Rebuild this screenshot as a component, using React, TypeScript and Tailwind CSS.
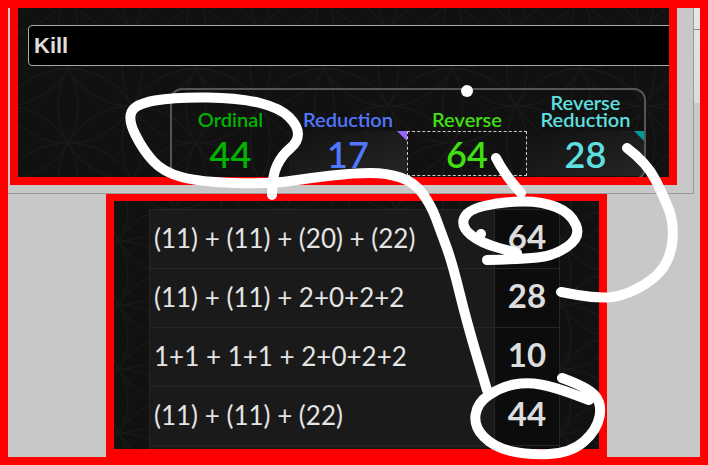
type Pt = [number, number];

// annotation strokes, hand drawn over the screenshot
const strokes: Pt[][] = [
  [[272,195],[272,176],[282,155],[298,142],[298,126],[280,108],[240,98],[175,97],[135,104],[128,120],[143,150],[163,172],[200,182],[270,184],[310,178],[354,173],[387,173],[414,182],[431,205],[441,232],[452,262],[467,323],[487,390]],
  [[562,378],[587,387],[602,403],[597,430],[571,453],[527,455],[494,447],[474,427],[477,403],[501,387],[527,382],[554,387],[589,400]],
  [[487,260],[521,259],[554,256],[581,237],[571,213],[541,201],[501,202],[467,210],[461,227],[481,243],[517,253]],
  [[496,158],[504,173],[521,193]],
  [[627,148],[647,163],[664,197],[674,223],[671,257],[654,280],[621,297],[594,298],[561,292]],
];

function smooth(pts: Pt[]) {
  let d = `M${pts[0][0]} ${pts[0][1]}`;
  for (let i = 1; i < pts.length - 1; i++) {
    const mx = (pts[i][0] + pts[i + 1][0]) / 2;
    const my = (pts[i][1] + pts[i + 1][1]) / 2;
    d += ` Q${pts[i][0]} ${pts[i][1]} ${mx} ${my}`;
  }
  const last = pts[pts.length - 1];
  return d + ` L${last[0]} ${last[1]}`;
}

// flower of life background
function Flower({ cx, cy, r }: { cx: number; cy: number; r: number }) {
  const circles: Pt[] = [];
  const dx = (r * Math.sqrt(3)) / 2;
  for (let i = -10; i <= 10; i++) {
    for (let j = -8; j <= 8; j++) {
      circles.push([cx + i * dx, cy + j * r + (i % 2 ? r / 2 : 0)]);
    }
  }
  return (
    <svg className="absolute inset-0 w-full h-full" fill="none" stroke="#191919" strokeWidth="1.5">
      {circles.map(([x, y], i) => (
        <circle key={i} cx={x} cy={y} r={r} />
      ))}
    </svg>
  );
}

const ciphers = [
  { label: ["Ordinal"], value: 44, text: "text-[#00b400]", w: "w-[117px]" },
  { label: ["Reduction"], value: 17, text: "text-[#5277ff]", w: "w-[118px]", corner: "border-t-[#9966ff]" },
  { label: ["Reverse"], value: 64, text: "text-[#40e010]", w: "w-[120px]", focus: true },
  { label: ["Reverse", "Reduction"], value: 28, text: "text-[#5ee0e0]", w: "w-[117px]", corner: "border-t-[#009999]" },
];

const rows = [
  { sum: "(11) + (11) + (20) + (22)", total: 64 },
  { sum: "(11) + (11) + 2+0+2+2", total: 28 },
  { sum: "1+1 + 1+1 + 2+0+2+2", total: 10 },
  { sum: "(11) + (11) + (22)", total: 44 },
  { sum: "", total: "" },
];

export default function App() {
  return (
    <div className="relative w-[708px] h-[465px] p-2 bg-[#f00] overflow-hidden font-['Lato',sans-serif]">
      <div className="h-[449px] bg-[#c8c8c8] flex flex-col">
        <div className="flex">
          {/* ENTRY PANEL */}
          <div className="w-[686px] pl-[2px] pr-4 pb-2 bg-[#c8c8c8] border-r border-b border-[#9a9a9a]">
            <div className="relative h-[177px] border-x-8 border-b-8 border-[#f00] bg-[#111] overflow-hidden">
              <Flower cx={50} cy={135} r={74} />
              <div className="relative pt-[17px] pl-[10px]">
                <div className="w-[700px] h-[41px] rounded-[4px] border border-[#aaa] bg-black pl-[5px] flex items-center font-['Liberation_Sans',sans-serif] font-bold text-[22px] text-[#ddd]">
                  Kill
                </div>
                <div className="mt-[22px] ml-[142px] w-[476px] h-[92px] rounded-xl border-2 border-[#555] flex overflow-hidden">
                  {ciphers.map((c) => (
                    <div key={c.value} className={`${c.w} shrink-0 flex flex-col`}>
                      <div className={`h-[41px] flex flex-col items-center justify-end text-[20px] leading-[17px] font-semibold pb-[3px] ${c.text}`}>
                        {c.label.map((l) => (
                          <span key={l}>{l}</span>
                        ))}
                      </div>
                      <div
                        className={`relative h-[45px] flex items-center justify-center text-[36px] font-semibold ${c.text} ${
                          c.focus ? "border border-dashed border-[#ccc]" : c.corner ? "bg-gradient-to-br from-[#111] to-[#262626]" : ""
                        }`}
                      >
                        {c.value}
                        {c.corner && (
                          <span className={`absolute top-0 right-0 w-0 h-0 border-l-[10px] border-l-transparent border-t-[10px] ${c.corner}`} />
                        )}
                      </div>
                    </div>
                  ))}
                </div>
              </div>
            </div>
          </div>
          {/* sliver of the scrollbar on the right */}
          <div className="w-[6px] h-[95px] bg-gradient-to-b from-[#e6e6e6] to-[#dcdcdc]">
            <div className="h-[22px] border-b border-[#8a8a8a]" />
          </div>
        </div>

        {/* BREAKDOWN PANEL */}
        <div className="relative ml-[98px] w-[501px] h-[264px] border-8 border-t-[7px] border-[#f00] bg-[#111] overflow-hidden">
          <Flower cx={5} cy={40} r={64} />
          <div className="relative ml-[35px] mt-2 w-[411px] border-l border-t border-r border-[#262626]">
            {rows.map((r, i) => (
              <div key={i} className="flex h-[59px] border-b border-[#262626]">
                <div className="w-[344px] bg-[#1a1a1a] pl-1 pb-[2px] flex items-center text-[26px] text-[#e4e4e4]">
                  {r.sum}
                </div>
                <div className="flex-1 border-l border-[#262626] bg-[#0c0c0c] pb-[4px] flex items-center justify-center text-[33px] font-bold text-[#ddd]">
                  {r.total}
                </div>
              </div>
            ))}
          </div>
        </div>
      </div>

      {/* WHITE MARKER ANNOTATIONS */}
      <svg className="absolute top-0 left-0 w-[708px] h-[465px]" fill="none" stroke="#fff" strokeWidth="10" strokeLinecap="round" strokeLinejoin="round">
        {strokes.map((s, i) => (
          <path key={i} d={smooth(s)} />
        ))}
        <circle cx="467" cy="91" r="6" fill="#fff" stroke="none" />
        <circle cx="481" cy="234" r="5" fill="#fff" stroke="none" />
      </svg>
    </div>
  );
}
